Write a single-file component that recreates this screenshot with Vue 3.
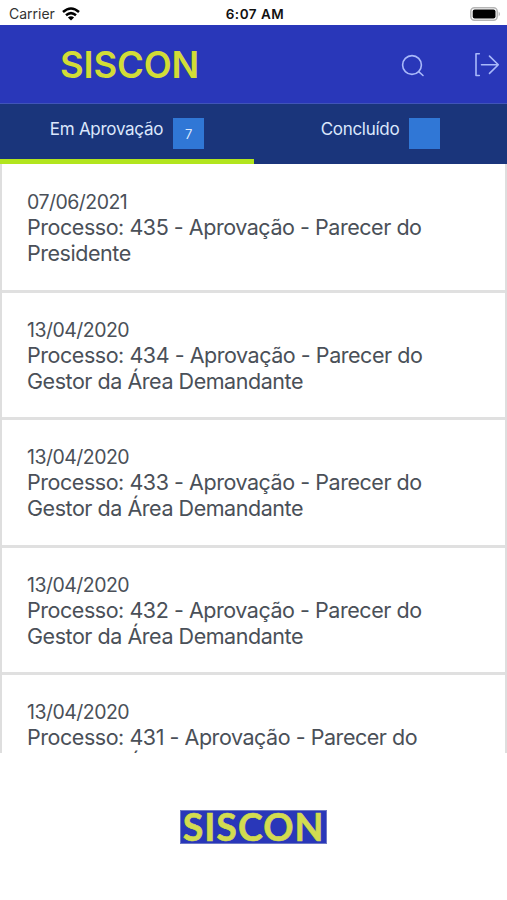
<script setup>
const rows = [
  { id: 435, date: '07/06/2021', who: 'Presidente' },
  { id: 434, date: '13/04/2020', who: 'Gestor da Área Demandante' },
  { id: 433, date: '13/04/2020', who: 'Gestor da Área Demandante' },
  { id: 432, date: '13/04/2020', who: 'Gestor da Área Demandante' },
  { id: 431, date: '13/04/2020', who: 'Gestor da Área Demandante' },
]
</script>

<template>
  <div class="screen">
    <div class="status">
      <div class="carrier">
        <span>Carrier</span>
        <svg width="18" height="14" viewBox="0 0 18 14" fill="none" stroke="#000" stroke-width="2.5">
          <path d="M1 5Q9-2 17 5" />
          <path d="M4 8.3Q9 4 14 8.3" />
          <path d="M9 13.6L5.9 10.5Q9 8 12.1 10.5Z" fill="#000" stroke="none" />
        </svg>
      </div>
      <div class="clock">6:07 AM</div>
      <div class="power">
        <svg width="31" height="14" viewBox="0 0 31 14">
          <rect x=".8" y=".8" width="26.4" height="12.4" rx="3.6" fill="#fff" stroke="#b5b5b5" stroke-width="1.5" />
          <rect x="2.7" y="2.5" width="22.8" height="9" rx="2" fill="#000" />
          <path d="M28.7 4.5Q31 7 28.7 9.5Z" fill="#aaa" />
        </svg>
      </div>
    </div>
    <header class="bar">
      <h1>SISCON</h1>
      <svg class="search" width="24" height="24" viewBox="0 0 24 24" fill="none" stroke="#a9b9fa" stroke-width="1.6" stroke-linecap="round">
        <circle cx="11" cy="11" r="9.4" />
        <path d="M17.7 17.7L22 21.5" />
      </svg>
      <svg class="exit" width="26" height="26" viewBox="0 0 26 26" fill="none" stroke="#a9b9fa" stroke-width="1.6" stroke-linecap="round" stroke-linejoin="round">
        <path d="M5.3 1.8H2V23.5H5.3M7.5 12.7H24.3M15.5 4.1L24.3 12.7L15.5 21.4" />
      </svg>
    </header>
    <nav class="tabs">
      <div class="tab active"><span class="label">Em Aprovação</span><span class="badge">7</span></div>
      <div class="tab"><span class="label">Concluído</span><span class="badge"></span></div>
    </nav>
    <main class="list">
      <article v-for="row in rows" :key="row.id" class="row">
        <div class="date">{{ row.date }}</div>
        <div class="title">Processo: {{ row.id }} - Aprovação - Parecer do</div>
        <div class="title">{{ row.who }}</div>
      </article>
    </main>
    <footer class="foot"><div class="logo">SISCON</div></footer>
  </div>
</template>

<style>
body { margin: 0; background: #fff; }
</style>

<style scoped>
.screen { width: 507px; height: 900px; overflow: hidden; display: flex; flex-direction: column; font-family: Inter, "Liberation Sans", sans-serif; background: #fff; }
.status { height: 25px; flex: none; display: grid; grid-template-columns: 1fr 1fr 1fr; align-items: center; padding: 2px 6px 0 9px; box-sizing: border-box; color: #111; font-size: 14px; }
.carrier { display: flex; align-items: center; gap: 7px; color: #333; }
.clock { text-align: center; font-weight: 600; font-size: 13.5px; letter-spacing: .5px; }
.power { display: flex; justify-content: flex-end; }
.bar { height: 79px; flex: none; box-sizing: border-box; display: flex; align-items: center; padding: 1px 7px 0 60px; background: #2937b9; border-bottom: 1px solid #4054b8; }
h1 { margin: 0; color: #d2dc37; font-size: 36.5px; line-height: 44px; font-weight: 600; letter-spacing: -.2px; }
.search { margin-left: auto; margin-top: 2px; }
.exit { margin-left: 49px; }
.tabs { height: 60px; flex: none; display: grid; grid-template-columns: 254px 253px; background: #1a357b; }
.tab { display: flex; box-sizing: border-box; justify-content: center; gap: 10px; padding-top: 14px; color: #dce7fc; border-bottom: 1px solid #1a357b; }
.active { border-bottom: 5px solid #b2e51e; }
.label { font-size: 17px; line-height: 22px; letter-spacing: -.28px; }
.badge { width: 31px; height: 31px; display: flex; align-items: center; justify-content: center; background: #3077d6; font-size: 13px; }
.list { height: 589px; flex: none; overflow: hidden; box-sizing: border-box; border: solid #dedede; border-width: 0 2px; padding-top: 1px; }
.row { height: 127.5px; box-sizing: border-box; padding: 24px 25px 0; border-bottom: 3px solid #e0e0e0; color: #4a5058; white-space: nowrap; }
.date { font-size: 19.5px; line-height: 26px; letter-spacing: -.52px; margin-bottom: -.6px; }
.title { font-size: 21.5px; line-height: 26px; letter-spacing: -.46px; }
.foot { flex: 1; display: flex; justify-content: center; align-items: flex-start; padding-top: 57px; }
.logo { width: 147px; height: 34px; box-sizing: border-box; background: #2937b9; border: 1px solid #6d78c5; color: #d2dc50; font: 700 37.5px/32px Lato, sans-serif; letter-spacing: 1px; text-align: center; -webkit-text-stroke: .6px #d2dc50; }
</style>
